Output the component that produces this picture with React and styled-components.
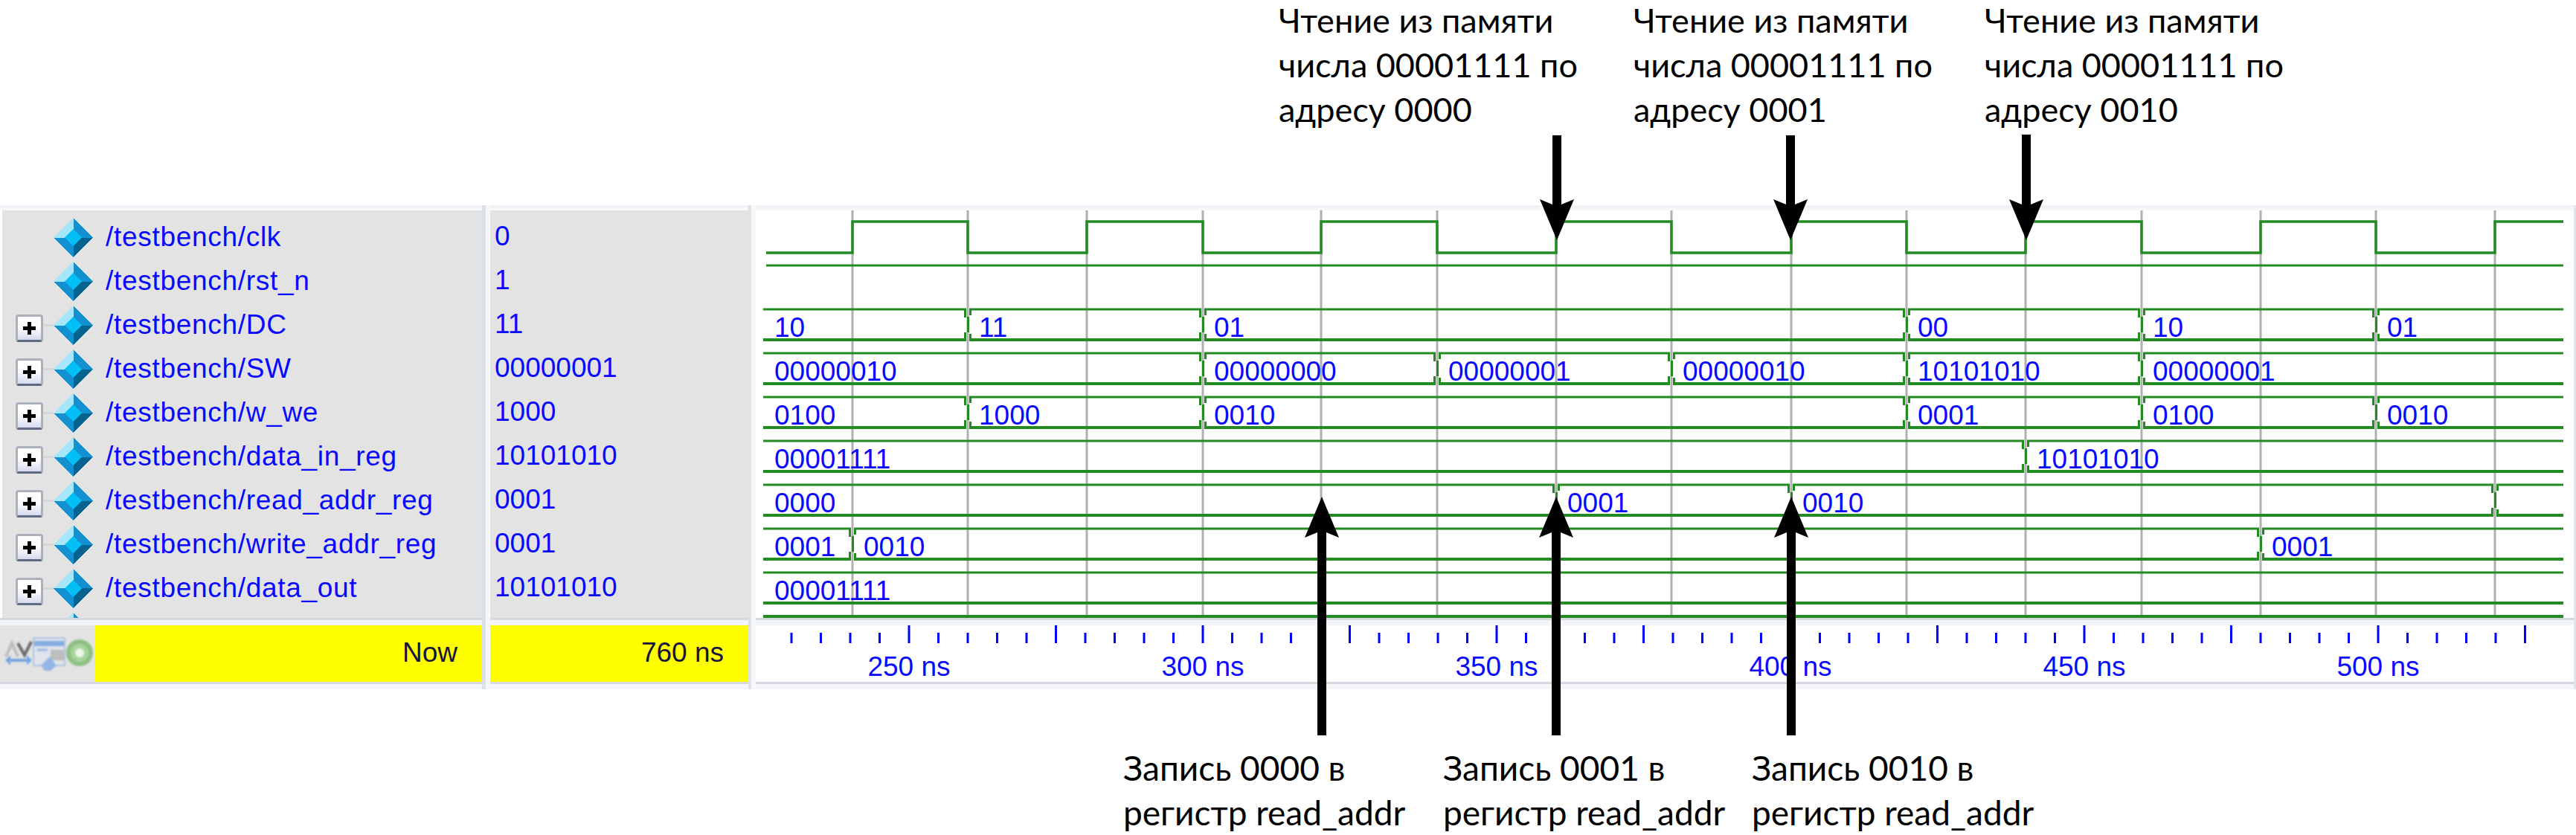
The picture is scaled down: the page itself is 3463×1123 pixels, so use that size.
import React from "react"
import styled, { createGlobalStyle } from "styled-components"

const GlobalStyle = createGlobalStyle`
  html, body {
    margin: 0;
    padding: 0;
    background: #fff;
  }
`

const UI_FONT = `"Liberation Sans", Arial, sans-serif`
const NOTE_FONT = `Lato, "Noto Sans", "Open Sans", sans-serif`
const GREEN = "#228b22"
const BLUE = "#0808ff"

const Page = styled.div`
  position: relative;
  width: 3463px;
  height: 1123px;
  overflow: hidden;
  background: #fff;
`

const TopNotes = styled.div`
  display: grid;
  grid-template-columns: 477px 472px auto;
  align-content: start;
  height: 276px;
  padding-left: 1719px;
  box-sizing: border-box;
`

const BottomNotes = styled.div`
  display: grid;
  grid-template-columns: 430px 415px auto;
  padding: 76px 0 0 1510px;
`

const Note = styled.div`
  font-family: ${NOTE_FONT};
  font-size: ${p => p.$size}px;
  line-height: 60px;
  margin-top: ${p => p.$lift || 0}px;
  color: #000;
  white-space: nowrap;
`

const WaveWindow = styled.div`
  display: flex;
  height: 651px;
`

const Pane = styled.div`
  display: flex;
  flex-direction: column;
  flex: ${p => (p.$grow ? "1" : "none")};
  width: ${p => (p.$grow ? "auto" : `${p.$width}px`)};
  border-right: ${p => (p.$grow ? "3px solid #e2e5ea" : "none")};
`

const Divider = styled.div`
  flex: none;
  width: ${p => p.$width}px;
  background: linear-gradient(90deg, #dde1e8 45%, #f6f7f9 45%);
`

const TopBand = styled.div`
  height: 7px;
  flex: none;
  background: linear-gradient(180deg, #eef1f6 43%, #f6f7f9 43%);
`

const LowerBand = styled.div`
  height: 10px;
  flex: none;
  background: linear-gradient(180deg, #d5d9df 35%, #f3f5f8 35%);
`

const SignalList = styled.div`
  height: 548px;
  flex: none;
  overflow: hidden;
  background: #e3e3e3;
  padding-top: 7px;
  margin-left: ${p => p.$inset || 0}px;
  box-sizing: border-box;
`

const Row = styled.div`
  display: flex;
  align-items: center;
  height: 59px;
  font-family: ${UI_FONT};
  font-size: 37px;
  color: ${BLUE};
  white-space: nowrap;
`

const ExpandSlot = styled.div`
  flex: none;
  width: 69px;
  padding-left: 18px;
  box-sizing: border-box;
`

const PlusBox = styled.div`
  position: relative;
  width: 37px;
  height: 37px;
  margin-top: 8px;
  box-sizing: border-box;
  border: 3px solid #aab0bc;
  border-bottom-color: #5f6a80;
  border-radius: 4px;
  background: linear-gradient(180deg, #fff 45%, #d5d9ee 100%);

  &::before,
  &::after {
    content: "";
    position: absolute;
    background: #000;
  }
  &::before {
    left: 7px;
    top: 13px;
    width: 17px;
    height: 5px;
  }
  &::after {
    left: 13px;
    top: 7px;
    width: 5px;
    height: 17px;
  }
`

const Connector = styled.div`
  position: absolute;
  left: 34px;
  top: 10px;
  width: 14px;
  height: 3px;
  background: #d6d6d6;
`

const Diamond = styled.svg`
  flex: none;
  width: 53px;
  height: 53px;
  margin-right: 17px;
  shape-rendering: crispEdges;
`

const NameCell = styled.div`
  padding-bottom: 2px;
  letter-spacing: 0.7px;
`

const ValueCell = styled.div`
  padding: 0 0 3px 6px;
`

const Footer = styled.div`
  display: flex;
  height: 76px;
  flex: none;
  background: ${p => (p.$plain ? "#fff" : "#e3e3e3")};
`

const ToolIcons = styled.svg`
  flex: none;
  width: 128px;
  height: 76px;
  filter: blur(1.2px);
`

const NowCell = styled.div`
  flex: 1;
  background: #ff0;
  padding-right: 33px;
  font-family: ${UI_FONT};
  font-size: 37px;
  line-height: 74px;
  color: #14143c;
  text-align: right;
`

const WaveBody = styled.svg`
  display: block;
  flex: none;
  width: 100%;
  height: 548px;
`

const Ruler = styled.svg`
  display: block;
  width: 100%;
  height: 76px;
`

const WaveText = styled.text`
  font-family: ${UI_FONT};
  font-size: 37px;
  fill: ${BLUE};
`

const ArrowBox = styled.svg`
  position: absolute;
  left: ${p => p.$x - 23}px;
  top: ${p => p.$top}px;
  width: 46px;
  height: ${p => p.$height}px;
`

const EDGES = [1146, 1301, 1461, 1617, 1776, 1932, 2092, 2247, 2408, 2563, 2723, 2879, 3039, 3194, 3354]

const signals = [
  { name: "/testbench/clk", value: "0" },
  { name: "/testbench/rst_n", value: "1" },
  { name: "/testbench/DC", value: "11", bus: true },
  { name: "/testbench/SW", value: "00000001", bus: true },
  { name: "/testbench/w_we", value: "1000", bus: true },
  { name: "/testbench/data_in_reg", value: "10101010", bus: true },
  { name: "/testbench/read_addr_reg", value: "0001", bus: true },
  { name: "/testbench/write_addr_reg", value: "0001", bus: true },
  { name: "/testbench/data_out", value: "10101010", bus: true },
  { name: "", value: "", bus: true },
]

const buses = [
  { top: 416, first: "10", changes: [[1301, "11"], [1617, "01"], [2563, "00"], [2879, "10"], [3194, "01"]] },
  { top: 475, first: "00000010", changes: [[1617, "00000000"], [1932, "00000001"], [2247, "00000010"], [2563, "10101010"], [2879, "00000001"]] },
  { top: 534, first: "0100", changes: [[1301, "1000"], [1617, "0010"], [2563, "0001"], [2879, "0100"], [3194, "0010"]] },
  { top: 593, first: "00001111", changes: [[2723, "10101010"]] },
  { top: 652, first: "0000", changes: [[2092, "0001"], [2408, "0010"], [3354, ""]] },
  { top: 711, first: "0001", changes: [[1146, "0010"], [3039, "0001"]] },
  { top: 770, first: "00001111", changes: [] },
]

const WAVE_START = 1026
const WAVE_END = 3446
const BUS_HEIGHT = 41

const DiamondIcon = () => (
  <Diamond viewBox="0 0 52 52">
    <polygon points="26,0 0,26 26,26" fill="#a5e6fb" />
    <polygon points="26,0 52,26 26,26" fill="#1390cf" />
    <polygon points="0,26 26,52 26,26" fill="#1390cf" />
    <polygon points="52,26 26,52 26,26" fill="#04638f" />
    <polygon points="26,15 37,26 26,37 15,26" fill="#02c0f5" />
  </Diamond>
)

const ClockWave = () => {
  const high = 298
  const low = 340
  const points = [[1030, low]]
  EDGES.forEach((x, i) => {
    const before = i % 2 === 0 ? low : high
    const after = i % 2 === 0 ? high : low
    points.push([x, before], [x, after])
  })
  points.push([WAVE_END, high])
  return (
    <polyline
      points={points.map(p => p.join(",")).join(" ")}
      fill="none"
      stroke={GREEN}
      strokeWidth="3.5"
      strokeLinejoin="miter"
    />
  )
}

const BusWave = ({ top, first, changes }) => {
  const bottom = top + BUS_HEIGHT
  const stops = [WAVE_START, ...changes.map(c => c[0]), WAVE_END]
  const segments = []
  for (let i = 0; i < stops.length - 1; i++) {
    const from = i === 0 ? stops[i] : stops[i] + 2
    const to = i === stops.length - 2 ? stops[i + 1] : stops[i + 1] - 2
    segments.push([from, to])
  }
  return (
    <g>
      {segments.map(([from, to]) => (
        <g key={from}>
          <rect x={from} y={top - 1.5} width={to - from} height="3" fill={GREEN} />
          <rect x={from} y={bottom - 2} width={to - from} height="4" fill={GREEN} />
        </g>
      ))}
      {changes.map(([x]) => (
        <g key={x} fill={GREEN}>
          <rect x={x - 5} y={top - 1} width="3" height="12" />
          <rect x={x + 2} y={top - 1} width="3" height="9" />
          <rect x={x - 1} y={top + 10} width="3" height={BUS_HEIGHT - 20} />
          <rect x={x - 5} y={bottom - 10} width="3" height="11" />
          <rect x={x + 2} y={bottom - 8} width="3" height="9" />
        </g>
      ))}
      <WaveText x="1041" y={top + 36.5}>{first}</WaveText>
      {changes.map(([x, label]) => (
        <WaveText key={x} x={x + 15} y={top + 36.5}>{label}</WaveText>
      ))}
    </g>
  )
}

const Arrow = ({ x, top, bottom, up }) => {
  const h = bottom - top
  const points = up
    ? `23,0 46,55 29,48 29,${h} 17,${h} 17,48 0,55`
    : `17,0 29,0 29,${h - 48} 46,${h - 55} 23,${h} 0,${h - 55} 17,${h - 48}`
  return (
    <ArrowBox $x={x} $top={top} $height={h} viewBox={`0 0 46 ${h}`}>
      <polygon points={points} fill="#000" />
    </ArrowBox>
  )
}

const ticks = Array.from({ length: 60 }, (_, i) => i - 4)
const TICK_STEP = 39.5
const FIRST_MAJOR = 1222
const rulerLabels = ["250 ns", "300 ns", "350 ns", "400 ns", "450 ns", "500 ns"]

const App = () => (
  <Page>
    <GlobalStyle />
    <TopNotes>
      <Note $size={45} $lift={-3}>Чтение из памяти<br />числа 00001111 по<br />адресу 0000</Note>
      <Note $size={45} $lift={-3}>Чтение из памяти<br />числа 00001111 по<br />адресу 0001</Note>
      <Note $size={45} $lift={-3}>Чтение из памяти<br />числа 00001111 по<br />адресу 0010</Note>
    </TopNotes>

    <WaveWindow>
      <Pane $width={648}>
        <TopBand />
        <SignalList $inset={3}>
          {signals.map(s => (
            <Row key={s.name}>
              <ExpandSlot>
                {s.bus && (
                  <PlusBox>
                    <Connector />
                  </PlusBox>
                )}
              </ExpandSlot>
              <DiamondIcon />
              <NameCell>{s.name}</NameCell>
            </Row>
          ))}
        </SignalList>
        <LowerBand />
        <Footer>
          <ToolIcons viewBox="0 0 128 76">
            <g fill="none" strokeWidth="4">
              <path d="M8 42 L16 24 L24 42" stroke="#bdbdbd" />
              <path d="M24 24 L33 40 L42 22" stroke="#6c6c6c" />
              <path d="M9 47 H41" stroke="#74a4e0" />
              <path d="M14 42 L9 47 L14 52 M36 42 L41 47 L36 52" stroke="#74a4e0" strokeWidth="2.5" />
            </g>
            <rect x="45" y="17" width="42" height="37" fill="#dfe4ec" stroke="#b2c3de" strokeWidth="2" />
            <rect x="46" y="21" width="40" height="7" fill="#86aee0" />
            <rect x="50" y="31" width="14" height="4" fill="#a9c0e4" />
            <rect x="68" y="33" width="18" height="14" fill="#bdbdbd" />
            <polygon points="55,54 67,42 76,54 68,61 60,61" fill="#94b6e6" />
            <circle cx="107" cy="37" r="18" fill="#8fc083" />
            <circle cx="107" cy="37" r="12" fill="#a8d49c" />
            <circle cx="107" cy="37" r="6" fill="#eef7ea" />
          </ToolIcons>
          <NowCell>Now</NowCell>
        </Footer>
        <LowerBand />
      </Pane>
      <Divider $width={11} />
      <Pane $width={347}>
        <TopBand />
        <SignalList>
          {signals.map(s => (
            <Row key={s.name}>
              <ValueCell>{s.value}</ValueCell>
            </Row>
          ))}
        </SignalList>
        <LowerBand />
        <Footer>
          <NowCell>760 ns</NowCell>
        </Footer>
        <LowerBand />
      </Pane>
      <Divider $width={10} />
      <Pane $grow>
        <TopBand />
        <WaveBody viewBox="1016 283 2444 548">
          {EDGES.map(x => (
            <rect key={x} x={x - 1.5} y="283" width="3" height="548" fill="#b0b0b0" />
          ))}
          <ClockWave />
          <rect x="1030" y="355.5" width={WAVE_END - 1030} height="3" fill={GREEN} />
          {buses.map(b => (
            <BusWave key={b.top} {...b} />
          ))}
          <rect x={WAVE_START} y="827" width={WAVE_END - WAVE_START} height="4" fill={GREEN} />
        </WaveBody>
        <LowerBand />
        <Footer $plain>
          <Ruler viewBox="1016 841 2444 76">
            {ticks.map(i => {
              const x = FIRST_MAJOR + i * TICK_STEP
              const major = i % 5 === 0
              return <rect key={i} x={x - 1.5} y={major ? 841 : 851} width="3" height={major ? 24 : 14} fill="#0000ff" />
            })}
            {rulerLabels.map((label, i) => (
              <WaveText key={label} x={FIRST_MAJOR + i * 395} y="909" textAnchor="middle">{label}</WaveText>
            ))}
          </Ruler>
        </Footer>
        <LowerBand />
      </Pane>
    </WaveWindow>

    <BottomNotes>
      <Note $size={46}>Запись 0000 в<br />регистр read_addr</Note>
      <Note $size={46}>Запись 0001 в<br />регистр read_addr</Note>
      <Note $size={46}>Запись 0010 в<br />регистр read_addr</Note>
    </BottomNotes>

    <Arrow x={2093} top={182} bottom={323} />
    <Arrow x={2407} top={182} bottom={323} />
    <Arrow x={2724} top={181} bottom={323} />
    <Arrow x={1777} top={668} bottom={989} up />
    <Arrow x={2092} top={668} bottom={989} up />
    <Arrow x={2408} top={668} bottom={989} up />
  </Page>
)

export default App
